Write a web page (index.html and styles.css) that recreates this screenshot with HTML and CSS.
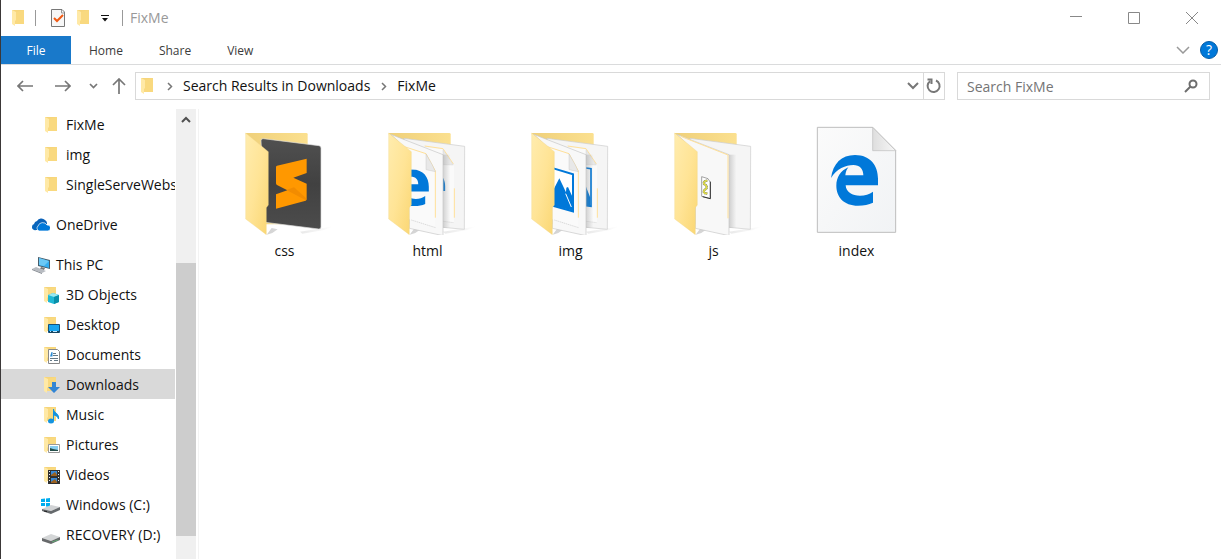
FILE: index.html
```html
<!DOCTYPE html>
<html lang="en">
<head>
<meta charset="utf-8">
<title>FixMe</title>
<link rel="stylesheet" href="styles.css">
</head>
<body>
<svg class="defs" aria-hidden="true">
  <defs>
    <linearGradient id="gFlap" x1="0" y1="0" x2="1" y2="1"><stop offset="0" stop-color="#ffecae"/><stop offset=".5" stop-color="#ffe496"/><stop offset="1" stop-color="#fad672"/></linearGradient>
    <linearGradient id="gBack" x1="0" y1="0" x2="1" y2="0"><stop offset="0" stop-color="#efd07a"/><stop offset="1" stop-color="#fbe08f"/></linearGradient>
    <linearGradient id="gPaper" x1="0" y1="0" x2="1" y2="1"><stop offset="0" stop-color="#fbfbfb"/><stop offset="1" stop-color="#f1f3f5"/></linearGradient>
    <linearGradient id="gShade" x1="0" y1="0" x2="1" y2="0"><stop offset="0" stop-color="#dedede"/><stop offset="1" stop-color="#f7f7f7"/></linearGradient>
    <linearGradient id="gShadow" x1="0" y1="0" x2="1" y2="0"><stop offset="0" stop-color="#d2d2d2"/><stop offset="1" stop-color="#fff"/></linearGradient>
    <linearGradient id="gEdge" x1="0" y1="0" x2="1" y2="0"><stop offset="0" stop-color="#888" stop-opacity=".35"/><stop offset="1" stop-color="#888" stop-opacity="0"/></linearGradient>
    <linearGradient id="gDark" x1="0" y1="0" x2="0" y2="1"><stop offset="0" stop-color="#505050"/><stop offset=".5" stop-color="#414141"/><stop offset="1" stop-color="#4c4c4c"/></linearGradient>
    <clipPath id="cFront"><path d="M93 80h79v250H93z"/></clipPath>
    <clipPath id="cBehind"><path d="M195 80h33v250h-33z"/></clipPath>
  </defs>
  <symbol id="folder" viewBox="0 0 16 18">
    <path d="M2 1h12v11H2z" fill="#f6d57b"/><path d="M5 3l9-2v14H5z" fill="#f9d97f"/>
    <path d="M2 1l4 2v8l-1 1v5l-3-2z" fill="#ffe9a6"/>
  </symbol>
  <symbol id="edge" viewBox="0 0 144 154">
    <path d="M1 70C7 27 32 1 73 1c47 0 69 33 69 71v20H45c1 21 20 31 43 31 15 0 28-4 39-12v33c-13 6-27 9-45 9-43 0-65-27-65-60 0-25 13-45 36-55-5 6-8 14-9 24h54c0-20-11-31-30-31C45 31 18 42 1 70z" fill="#0078d9"/>
  </symbol>
  <symbol id="backfolder" viewBox="0 0 300 345">
    <path d="M95 344l15-20 18 4-16 11zM195 335l65-10 35-6-28 11-65 11z" fill="url(#gShadow)"/>
    <path d="M32 39h182q4 0 4 4v270H70z" fill="url(#gBack)"/>
  </symbol>
  <symbol id="flap" viewBox="0 0 300 345">
    <path d="M32 39L100 95v160l-6 8v81L32 297z" fill="url(#gFlap)" stroke="#efd38a"/>
  </symbol>
  <symbol id="sheetBehind" viewBox="0 0 300 345">
    <path d="M78 55l182 24-1 249-64-6-85-15z" fill="#f5f5f5" stroke="#ccc" stroke-width="2"/>
  </symbol>
  <symbol id="sheetFront" viewBox="0 0 300 345">
    <path d="M195 104h22v219h-22z" fill="url(#gEdge)"/>
    <path d="M38 43l157 61v243l-101-22V95z" fill="#f8f8f8" stroke="#c6c6c6" stroke-width="2"/>
  </symbol>
  <symbol id="docBehind" viewBox="0 0 300 345">
    <path d="M130 82l65 5 33 48v172l-33-3V104z" fill="#fafafa"/>
    <path d="M140 78l55 8 31 46M229 205v88" stroke="#ffe099" stroke-width="3" fill="none"/>
    <path d="M195 89l31 46-31-1z" fill="#e8e8e8" stroke="#ccc"/>
    <path d="M196 304l31 4" stroke="#aaa" stroke-dasharray="4 2"/>
  </symbol>
  <symbol id="docFront" viewBox="0 0 300 345">
    <path d="M76 80l68 22 28 51v171l-78-26V95z" fill="#fafafa"/>
    <path d="M76 79l68 22 28 52v140" fill="none" stroke="#ffe099" stroke-width="3"/>
    <path d="M144 102v47l28 6-9-20z" fill="#e8e8e8" stroke="#bbb"/>
    <path d="M100 300l73 23" stroke="#999" stroke-dasharray="4 2"/>
  </symbol>
</svg>

<div class="window">
  <header class="titlebar">
    <svg class="ico" viewBox="0 0 16 18"><use href="#folder"/></svg>
    <span class="rule"></span>
    <button class="plain check" aria-label="Properties"><svg width="16" height="18" viewBox="0 0 16 18"><path d="M1.500.500H12L14.500 3V17.500H1.500z" fill="#f7f7f7" stroke="#777"/><path d="M11.500 1v3h3" fill="none" stroke="#999"/><path d="M4 9l3 3 6-6" fill="none" stroke="#f05a14" stroke-width="2"/></svg></button>
    <button class="plain newfolder" aria-label="New folder"><svg class="ico" viewBox="0 0 16 18"><use href="#folder"/></svg></button>
    <button class="plain customize" aria-label="Customize toolbar"><svg width="8" height="8" viewBox="0 0 8 8"><path d="M0 1.500h8" stroke="#111"/><path d="M1 4h6L4 7.500z" fill="#111"/></svg></button>
    <span class="rule"></span>
    <h1>FixMe</h1>
    <div class="controls">
      <button class="plain" aria-label="Minimize"><svg width="14" height="14" viewBox="0 0 14 14"><path d="M1 5.500h12" stroke="#888"/></svg></button>
      <button class="plain" aria-label="Maximize"><svg width="14" height="14" viewBox="0 0 14 14"><path d="M1.500 1.500h11v11h-11z" fill="none" stroke="#888"/></svg></button>
      <button class="plain" aria-label="Close"><svg width="14" height="14" viewBox="0 0 14 14"><path d="M1 1l12 12M13 1L1 13" stroke="#888"/></svg></button>
    </div>
  </header>

  <div class="ribbon">
    <button class="tab file">File</button>
    <button class="tab">Home</button>
    <button class="tab">Share</button>
    <button class="tab">View</button>
    <button class="plain expand" aria-label="Expand ribbon"><svg width="14" height="8" viewBox="0 0 14 8"><path d="M1 1l6 6 6-6" fill="none" stroke="#999" stroke-width="1.500"/></svg></button>
    <button class="help" aria-label="Help">?</button>
  </div>

  <div class="location">
    <div class="history">
      <button class="plain" aria-label="Back"><svg width="16" height="12" viewBox="0 0 16 12"><path d="M6 1L1 6l5 5M1 6h15" fill="none" stroke="#777" stroke-width="1.700"/></svg></button>
      <button class="plain" aria-label="Forward"><svg width="16" height="12" viewBox="0 0 16 12"><path d="M10 1l5 5-5 5M15 6H0" fill="none" stroke="#777" stroke-width="1.700"/></svg></button>
      <button class="plain recent" aria-label="Recent locations"><svg width="9" height="6" viewBox="0 0 9 6"><path d="M1 1l3.500 3.500L8 1" fill="none" stroke="#777" stroke-width="1.700"/></svg></button>
      <button class="plain" aria-label="Up"><svg width="14" height="16" viewBox="0 0 14 16"><path d="M1 7l6-6 6 6M7 1v15" fill="none" stroke="#777" stroke-width="1.700"/></svg></button>
    </div>
    <div class="address">
      <svg class="ico" viewBox="0 0 16 18"><use href="#folder"/></svg>
      <svg class="chev" width="6" height="9" viewBox="0 0 6 9"><path d="M1 1l3.500 3.500L1 8" fill="none" stroke="#777" stroke-width="1.500"/></svg>
      <a href="#results">Search Results in Downloads</a>
      <svg class="chev" width="6" height="9" viewBox="0 0 6 9"><path d="M1 1l3.500 3.500L1 8" fill="none" stroke="#777" stroke-width="1.500"/></svg>
      <a href="#fixme">FixMe</a>
      <button class="plain drop" aria-label="Previous locations"><svg width="12" height="8" viewBox="0 0 12 8"><path d="M1 1l5 5 5-5" fill="none" stroke="#777" stroke-width="2"/></svg></button>
      <button class="plain refresh" aria-label="Refresh"><svg width="16" height="16" viewBox="0 0 16 16"><path d="M10 2.500A6 6 0 1 1 4 3.200M1.500 1.500h4v4.500" fill="none" stroke="#777" stroke-width="2"/></svg></button>
    </div>
    <form class="search">
      <input type="text" aria-label="Search FixMe" placeholder="Search FixMe">
      <button class="plain" type="button" aria-label="Search"><svg width="14" height="14" viewBox="0 0 14 14"><circle cx="9" cy="5" r="3.500" fill="none" stroke="#6d6d6d" stroke-width="2"/><path d="M6.500 7.500L1 13" stroke="#6d6d6d" stroke-width="2"/></svg></button>
    </form>
  </div>

  <div class="body">
    <nav class="tree" aria-label="Folders">
      <ul>
        <li><a class="row" href="#fixme"><svg class="ico" viewBox="0 0 16 18"><use href="#folder"/></svg><span>FixMe</span></a></li>
        <li><a class="row" href="#img"><svg class="ico" viewBox="0 0 16 18"><use href="#folder"/></svg><span>img</span></a></li>
        <li><a class="row" href="#ssw"><svg class="ico" viewBox="0 0 16 18"><use href="#folder"/></svg><span>SingleServeWebs</span></a></li>
      </ul>
      <a class="row top" href="#onedrive"><svg class="ico" viewBox="0 0 18 18"><path d="M4 11a4 4 0 0 1-2-3 4 4 0 0 1 3-3 5 5 0 0 1 8-1 4 4 0 0 1 2 4" fill="#0b62b8"/><path d="M4 14a3 3 0 0 1-4-3 3 3 0 0 1 3-3 5 5 0 0 1 3-2v8z" fill="#0867bd"/><path d="M7 15a3 3 0 0 1-1-5 5 5 0 0 1 9-1 3 3 0 0 1 1 6z" fill="#0078d9" stroke="#fff" stroke-width=".700"/></svg><span>OneDrive</span></a>
      <ul>
        <li><a class="row top" href="#pc"><svg class="ico" viewBox="0 0 18 18"><path d="M6 1l12 3v9L6 10z" fill="#465d6c"/><path d="M7 2l10 3v7L7 9z" fill="#35aef0"/><path d="M7 2l10 3-5 5-5-1z" fill="#6bc8f5"/><path d="M9 11l4 1-1 2-4-1z" fill="#777"/><path d="M0 13l4-2 10 4-4 2z" fill="#b7bbc1"/><path d="M0 13l10 4v1L0 14z" fill="#858a92"/></svg><span>This PC</span></a></li>
        <li><a class="row" href="#3d"><svg class="ico" viewBox="0 0 18 18"><use href="#folder" width="16" height="18"/><path d="M6 9l5-2 6 2v7l-5 2-6-2z" fill="#20b8d4"/><path d="M6 9l5-2 6 2-5 2z" fill="#9be8ee"/><path d="M12 11l5-2v7l-5 2z" fill="#098fa9"/></svg><span>3D Objects</span></a></li>
        <li><a class="row" href="#desktop"><svg class="ico" viewBox="0 0 18 18"><use href="#folder" width="16" height="18"/><path d="M6.500 8.500h11v8h-11z" fill="#18a5ef" stroke="#14527c"/><path d="M7 15h10v2H7z" fill="#164560"/><path d="M8 15.500h1m2 0h4" stroke="#bce6ff"/></svg><span>Desktop</span></a></li>
        <li><a class="row" href="#documents"><svg class="ico" viewBox="0 0 18 18"><use href="#folder" width="16" height="18"/><path d="M6.500 3.500h9l2 2v12h-11z" fill="#fff" stroke="#888"/><path d="M11 7.500h3m-3 2h5m-8 3h8m-8 2h2m2 0h4" stroke="#657987"/><path d="M8 10.500l1.500-4.500h1v4.500z" fill="#2a8bd4"/></svg><span>Documents</span></a></li>
        <li><a class="row selected" href="#downloads" aria-current="true"><svg class="ico" viewBox="0 0 18 18"><use href="#folder" width="16" height="18"/><path d="M10 6h4v5h4l-6 6-6-6h4z" fill="#3285d5"/></svg><span>Downloads</span></a></li>
        <li><a class="row" href="#music"><svg class="ico" viewBox="0 0 18 18"><use href="#folder" width="16" height="18"/><ellipse cx="9" cy="15" rx="3" ry="2.500" fill="#1594df"/><path d="M11.500 15V3c0 4 6 4 5 10-1-3-3-4-5-4" fill="#1594df" stroke="#1594df"/></svg><span>Music</span></a></li>
        <li><a class="row" href="#pictures"><svg class="ico" viewBox="0 0 18 18"><use href="#folder" width="16" height="18"/><path d="M6.500 8.500h11v8h-11z" fill="#fff" stroke="#999"/><path d="M8 10h8v5H8z" fill="#87cdf0"/><path d="M8 12l3 1 5 1v1H8z" fill="#244e4a"/></svg><span>Pictures</span></a></li>
        <li><a class="row" href="#videos"><svg class="ico" viewBox="0 0 18 18"><use href="#folder" width="16" height="18"/><path d="M6 4h12v14H6z" fill="#303030"/><path d="M9 5h6v5H9zm0 7h6v5H9z" fill="#3889d7"/><path d="M9 9l4-3 2 3v1H9zm0 7l4-3 2 3v1H9z" fill="#9c611f"/><path d="M7.500 5v12m9-12v12" stroke="#eee" stroke-dasharray="1 2"/></svg><span>Videos</span></a></li>
        <li><a class="row drive" href="#c"><svg class="ico" viewBox="0 0 20 18"><path d="M1 3l4-.500V6H1zm5-.600L10 2v4H6zM1 7h4v3H1zm5 0h4v4l-4-.500z" fill="#00adef"/><path d="M2 13l9-4 9 2-9 4z" fill="#d1d3d5"/><path d="M2 13l9 2 9-4v3l-9 4-9-3z" fill="#65696c"/><path d="M4 15l3 .700" stroke="#222"/></svg><span>Windows (C:)</span></a></li>
        <li><a class="row drive" href="#d"><svg class="ico" viewBox="0 0 20 18"><path d="M2 12l9-4 9 3-9 4z" fill="#d4d6d7"/><path d="M2 12l9 3 9-4v3l-9 4-9-3z" fill="#67696b"/><path d="M12 16l6-2" stroke="#61a773"/></svg><span>RECOVERY (D:)</span></a></li>
      </ul>
    </nav>
    <div class="scrollbar">
      <button class="plain" aria-label="Scroll up"><svg width="10" height="7" viewBox="0 0 10 7"><path d="M1 6l4-4 4 4" fill="none" stroke="#505050" stroke-width="2"/></svg></button>
      <div class="track"><div class="thumb"></div></div>
    </div>
    <main class="files">
      <a class="item" href="#css"><svg viewBox="0 0 300 345"><use href="#backfolder"/><path d="M78 62q0-7 7-6l167 21q6 1 6 7v237q0 7-7 6L90 307z" fill="url(#gDark)" stroke="#ddd" stroke-width="2"/><path d="M123 141q0-3 3-4l89-21v43l-40 14 40 18v47q0 3-3 4l-89 24v-43l34-12-31-16q-3-2-3-5z" fill="#ff9800"/><path d="M154 210l23-8 38 34-2 5z" fill="#e57f00" opacity=".5"/><use href="#flap"/></svg><span>css</span></a>
      <a class="item" href="#html"><svg viewBox="0 0 300 345"><use href="#backfolder"/><use href="#sheetBehind"/><use href="#docBehind"/><g clip-path="url(#cBehind)"><use href="#edge" x="108" y="152" width="95" height="102"/></g><use href="#sheetFront"/><use href="#docFront"/><g clip-path="url(#cFront)"><use href="#edge" x="50" y="148" width="104" height="111"/></g><use href="#flap"/></svg><span>html</span></a>
      <a class="item" href="#images"><svg viewBox="0 0 300 345"><use href="#backfolder"/><use href="#sheetBehind"/><use href="#docBehind"/><path d="M195 144l15 2v113l-15-2" fill="none" stroke="#0078d9" stroke-width="5"/><path d="M195 200l13 33v26l-13-2z" fill="#0078d9"/><use href="#sheetFront"/><use href="#docFront"/><path d="M90 143l66 20v111l-66-18z" fill="#fff" stroke="#0078d9" stroke-width="6"/><path d="M92 220l23-45 20 42 1-14 5-2 16 35v36l-64-16z" fill="#0078d9"/><path d="M134 221l17 40" stroke="#fff" stroke-width="3"/><use href="#flap"/></svg><span>img</span></a>
      <a class="item" href="#js"><svg viewBox="0 0 300 345"><use href="#backfolder"/><use href="#sheetBehind"/><use href="#sheetFront"/><path d="M50 49l142 56v190" fill="none" stroke="#ffe099" stroke-width="3"/><path d="M113 170l19 6 7 11v49l-26-7z" fill="#fff" stroke="#777" stroke-width="2"/><path d="M139 185v51l-23-6" fill="none" stroke="#333" stroke-width="3"/><path d="M130 182q-13 1-10 10 12 6 6 15-10 5-5 12l9 2" fill="none" stroke="#666" stroke-width="7" stroke-dasharray="4 1"/><path d="M130 182q-13 1-10 10 12 6 6 15-10 5-5 12l9 2" fill="none" stroke="#dedb45" stroke-width="5"/><use href="#flap"/></svg><span>js</span></a>
      <a class="item" href="#index"><svg viewBox="0 0 300 345"><path d="M31 22h166l69 69v246H31z" fill="url(#gPaper)" stroke="#bdbdbd" stroke-width="3"/><path d="M197 22v70h69z" fill="url(#gShade)" stroke="#bdbdbd" stroke-width="2"/><use href="#edge" x="71" y="104" width="144" height="154"/></svg><span>index</span></a>
    </main>
  </div>
</div>
</body>
</html>
```

FILE: styles.css
```css
* { box-sizing: border-box; }

body {
  margin: 0;
  background: #fff;
  color: #111;
  font: 14px/20px "Open Sans", "Noto Sans", sans-serif;
}

a { color: inherit; text-decoration: none; }
svg { display: block; flex: none; }
ul { list-style: none; margin: 0; padding: 0; }

button {
  border: 0;
  padding: 0;
  background: transparent;
  color: inherit;
  font: inherit;
}

.plain {
  display: flex;
  align-items: center;
  justify-content: center;
}

.defs { position: absolute; width: 0; height: 0; }
.ico { width: 18px; height: 18px; }

.window {
  display: flex;
  flex-direction: column;
  min-height: 100vh;
  border-left: 1px solid #3b3838;
}

.titlebar {
  display: flex;
  align-items: center;
  height: 36px;
  padding-left: 8px;
}

.rule { width: 1px; height: 16px; margin-left: 8px; background: #999; }
.check { margin-left: 14px; }
.newfolder { margin-left: 8px; }
.customize { margin-left: 9px; margin-right: 5px; }
.titlebar h1 { margin: 0 0 0 7px; color: #999; font-size: 14px; font-weight: 400; }
.controls { display: flex; margin-left: auto; }
.controls button { width: 58px; height: 32px; }

.ribbon {
  display: flex;
  align-items: center;
  height: 29px;
  border-bottom: 1px solid #dadbdc;
}

.tab { height: 28px; padding: 2px 18px 0; color: #3c3c3c; font-size: 12px; }
.file { width: 70px; background: #1979ca; color: #fff; }
.expand { width: 14px; height: 28px; margin-left: auto; }

.help {
  width: 18px;
  height: 18px;
  margin: 0 3px 0 10px;
  border: 1px solid #075da7;
  border-radius: 50%;
  background: #0078d9;
  color: #fff;
  font-size: 14px;
  line-height: 16px;
}

.location {
  display: flex;
  align-items: center;
  gap: 12px;
  height: 44px;
  padding: 0 11px 2px 16px;
}

.history { display: flex; align-items: center; gap: 22px; margin-right: -3px; }
.history .recent { margin-right: -8px; margin-left: -4px; }

.address, .search {
  display: flex;
  align-items: center;
  height: 28px;
  border: 1px solid #d9d9d9;
}

.address { flex: 1; padding-left: 2px; }
.address .chev { margin: 0 10px 0 11px; }
.drop { width: 20px; height: 26px; margin-left: auto; }
.refresh { width: 21px; height: 26px; border-left: 1px solid #d9d9d9; }
.search { flex: 0 0 253px; padding-right: 11px; }

.search input {
  flex: 1;
  min-width: 0;
  border: 0;
  padding: 1px 9px 0;
  outline: 0;
  background: transparent;
  font: inherit;
}

.search input::placeholder { color: #757575; opacity: 1; }

.body { display: flex; flex: 1; }
.tree { width: 174px; padding-bottom: 10px; overflow: hidden; }
.tree > ul + .row { margin: 10px 0; }

.row {
  display: flex;
  align-items: center;
  gap: 6px;
  height: 30px;
  padding: 1px 0 0 41px;
  white-space: nowrap;
}

.row.top { padding-left: 31px; }
.row.drive { padding-left: 39px; }
.drive .ico { width: 20px; }
.selected { background: #d9d9d9; }

.scrollbar {
  display: flex;
  flex-direction: column;
  width: 20px;
  margin-left: 1px;
  background: #f0f0f0;
}

.scrollbar button { height: 20px; }
.track { display: flex; flex: 1; flex-direction: column; }
.track::before { content: ""; flex: 134; }
.track::after { content: ""; flex: 23; }
.thumb { flex: 273; background: #cdcdcd; }

.files {
  display: grid;
  flex: 1;
  grid-template-columns: repeat(auto-fill, 143px);
  align-content: start;
  margin-left: 2px;
  padding: 11px 0 0 14px;
  border-left: 1px solid #f3f3f3;
}

.item { display: flex; flex-direction: column; align-items: center; gap: 6px; }
.item svg { width: 100px; height: 115px; }
```
